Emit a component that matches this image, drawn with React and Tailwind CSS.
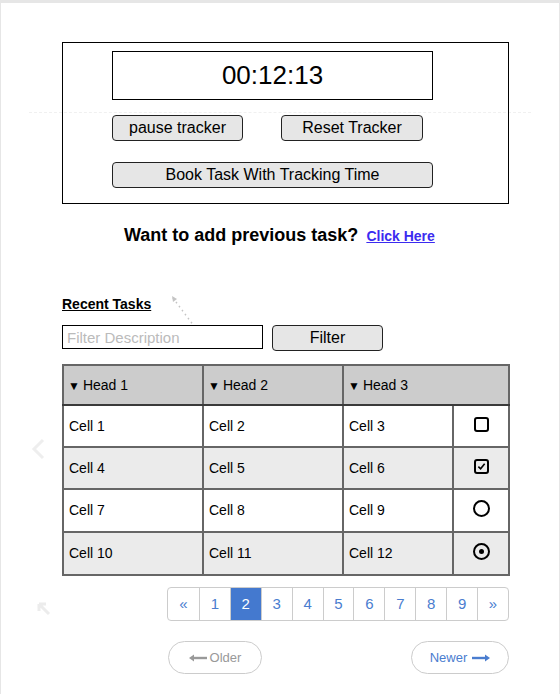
import React from "react"

const rows = [
  ["Cell 1", "Cell 2", "Cell 3", "box"],
  ["Cell 4", "Cell 5", "Cell 6", "boxChecked"],
  ["Cell 7", "Cell 8", "Cell 9", "radio"],
  ["Cell 10", "Cell 11", "Cell 12", "radioChecked"],
]

const Control = ({ kind }) => {
  if (kind === "box")
    return <span className="inline-block w-[15px] h-[15px] rounded-[3px] border-2 border-black" />
  if (kind === "boxChecked")
    return (
      <span className="inline-flex items-center justify-center w-[15px] h-[15px] rounded-[3px] border-2 border-black">
        <svg width="9" height="9" viewBox="0 0 10 10">
          <path d="M1.5 5.2 L4 7.6 L8.5 2" fill="none" stroke="black" strokeWidth="1.8" />
        </svg>
      </span>
    )
  if (kind === "radio")
    return <span className="inline-block w-[17px] h-[17px] rounded-full border-2 border-black" />
  return (
    <span className="inline-flex items-center justify-center w-[17px] h-[17px] rounded-full border-2 border-black">
      <span className="w-[5px] h-[5px] rounded-full bg-black" />
    </span>
  )
}

const pages = ["«", "1", "2", "3", "4", "5", "6", "7", "8", "9", "»"]

export default function App() {
  return (
    <div
      className="relative min-h-[694px] bg-white border-t-[3px] border-x border-[#e6e6e6] text-black"
      style={{ fontFamily: '"Liberation Sans", Arial, sans-serif' }}
    >
      {/* faint decorations */}
      <div className="absolute left-[28px] right-[28px] top-[109px] border-t border-dashed border-[#f0f0f0]" />
      <svg className="absolute left-[29px] top-[434px]" width="18" height="24" viewBox="0 0 18 24">
        <path d="M13 3 L4 12 L13 21" fill="none" stroke="#eeeeee" strokeWidth="3" />
      </svg>
      <svg className="absolute left-[35px] top-[598px]" width="16" height="16" viewBox="0 0 16 16">
        <path d="M3 3 L13 13 M3 3 L3 10 M3 3 L10 3" fill="none" stroke="#ececec" strokeWidth="3" />
      </svg>
      <svg className="absolute left-[168px] top-[290px]" width="30" height="36" viewBox="0 0 30 36">
        <path d="M4 5 L25 33" fill="none" stroke="#c4c4c4" strokeWidth="1.5" strokeDasharray="1.5 3.5" />
        <path d="M3 3 L8 6 L4 9 Z" fill="#c4c4c4" />
      </svg>

      <div className="relative pt-[39px] pl-[61px] w-[508px]">
        {/* tracker box */}
        <div className="border border-black pt-[8px] pb-[15px] pl-[49px] w-[447px]">
          <div className="w-[321px] h-[49px] border border-black flex items-center justify-center text-[26px]">
            00:12:13
          </div>
          <div className="flex mt-[15px]">
            <button className="w-[131px] h-[26px] rounded-[4px] border border-[#222] bg-[#e6e6e6] text-[16px] leading-none">
              pause tracker
            </button>
            <button className="ml-[38px] w-[142px] h-[26px] rounded-[4px] border border-[#222] bg-[#e6e6e6] text-[16px] leading-none">
              Reset Tracker
            </button>
          </div>
          <button className="mt-[21px] w-[321px] h-[26px] rounded-[4px] border border-[#222] bg-[#e6e6e6] text-[16px] leading-none">
            Book Task With Tracking Time
          </button>
        </div>

        {/* previous task */}
        <div className="mt-[18px] flex items-baseline gap-[8px] pl-[62px]">
          <span className="font-bold text-[18px]">Want to add previous task?</span>
          <a href="#" className="font-bold text-[14px] text-[#3b2bf0] underline">
            Click Here
          </a>
        </div>

        {/* recent tasks */}
        <div className="mt-[46px] font-bold text-[14px] underline leading-[18px]">Recent Tasks</div>
        <div className="flex mt-[12px] gap-[9px]">
          <input
            placeholder="Filter Description"
            className="w-[201px] h-[24px] border border-black px-[4px] text-[15px] placeholder:text-[#bbbbbb] outline-none"
          />
          <button className="w-[111px] h-[26px] rounded-[4px] border border-[#222] bg-[#e6e6e6] text-[16px] leading-none">
            Filter
          </button>
        </div>

        {/* table */}
        <table className="mt-[13px] w-[446px] border-collapse text-[14px] table-fixed">
          <colgroup>
            <col className="w-[140px]" />
            <col className="w-[140px]" />
            <col className="w-[110px]" />
            <col className="w-[56px]" />
          </colgroup>
          <thead>
            <tr className="h-[40px] bg-[#cccccc]">
              {["Head 1", "Head 2", "Head 3"].map((h, i) => (
                <th
                  key={h}
                  colSpan={i === 2 ? 2 : 1}
                  className="border-2 border-[#666] border-b-[#3a3a3a] text-left font-normal pl-[4px]"
                >
                  <span className="text-[12px] mr-[3px]">▼</span>
                  {h}
                </th>
              ))}
            </tr>
          </thead>
          <tbody>
            {rows.map((r, i) => (
              <tr key={i} className={`${i < 2 ? "h-[42px]" : "h-[43px]"} ${i % 2 ? "bg-[#ebebeb]" : "bg-white"}`}>
                {r.slice(0, 3).map((c) => (
                  <td key={c} className="border-2 border-[#666] pl-[5px]">
                    {c}
                  </td>
                ))}
                <td className="border-2 border-[#666] text-center align-middle">
                  <div className="flex justify-center -mt-[4px]">
                    <Control kind={r[3]} />
                  </div>
                </td>
              </tr>
            ))}
          </tbody>
        </table>

        {/* pagination */}
        <div className="mt-[11px] ml-[105px] flex w-[342px] h-[34px] rounded-[4px] border border-[#cccccc] overflow-hidden text-[15px] text-[#4a7dcf]">
          {pages.map((p, i) => (
            <div
              key={p}
              className={`w-[31px] flex items-center justify-center ${i > 0 ? "border-l border-[#cccccc]" : ""} ${
                p === "2" ? "bg-[#4479cf] text-white border-[#4479cf]" : ""
              }`}
            >
              {p}
            </div>
          ))}
        </div>

        <div className="mt-[20px] ml-[106px] flex justify-between w-[341px]">
          <button className="w-[94px] h-[33px] rounded-full border border-[#cccccc] flex items-center justify-center gap-[3px] text-[13px] text-[#999]">
            <svg width="18" height="8" viewBox="0 0 18 8">
              <path d="M0 4 L5 0.5 L5 7.5 Z" fill="#999" />
              <rect x="4" y="2.8" width="14" height="2.4" fill="#999" />
            </svg>
            Older
          </button>
          <button className="w-[98px] h-[33px] rounded-full border border-[#cccccc] flex items-center justify-center gap-[5px] text-[13px] text-[#4a7dcf]">
            Newer
            <svg width="18" height="8" viewBox="0 0 18 8">
              <rect x="0" y="2.8" width="14" height="2.4" fill="#4a7dcf" />
              <path d="M18 4 L13 0.5 L13 7.5 Z" fill="#4a7dcf" />
            </svg>
          </button>
        </div>
      </div>
    </div>
  )
}
